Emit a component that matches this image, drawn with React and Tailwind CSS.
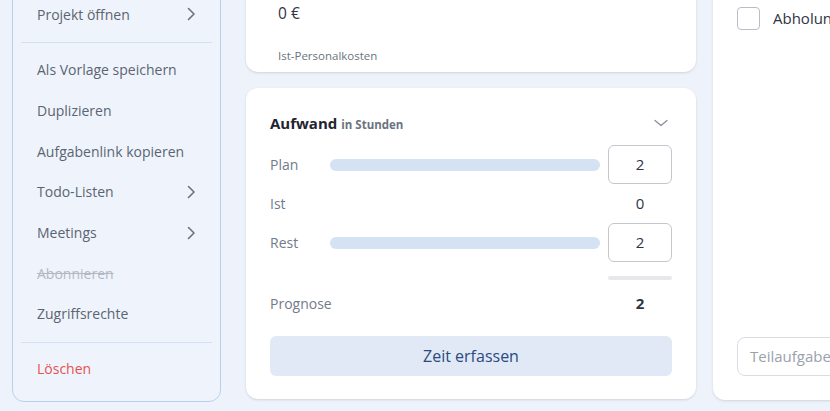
import React from 'react';

const Chevron = () => (
  <svg width="10" height="14" viewBox="0 0 10 14" fill="none" stroke="#6b7280" strokeWidth="1.6" strokeLinecap="round" strokeLinejoin="round">
    <path d="M2.5 1.5 8 7l-5.5 5.5" />
  </svg>
);

const MenuItem = ({ label, arrow, className = 'text-[#5b6472]' }) => (
  <div className={`h-[40.67px] px-4 flex items-center justify-between text-[14px] whitespace-nowrap ${className}`}>
    <span>{label}</span>
    {arrow && <Chevron />}
  </div>
);

const Bar = () => <div className="flex-1 h-3 rounded-full bg-[#d5e2f4] mr-2" />;

const NumInput = ({ value }) => (
  <div className="w-16 h-[39px] rounded-md border border-[#c3c7ce] flex items-center justify-center text-[15px] text-[#2f3542]">
    {value}
  </div>
);

export default function App() {
  return (
    <div
      className="w-[830px] h-[411px] overflow-hidden bg-[#eef3fb] flex items-start"
      style={{ fontFamily: '"Open Sans", Lato, sans-serif' }}
    >
      {/* Menü */}
      <div className="ml-3 w-[209px] shrink-0 -mt-[20px] pt-[13px] pb-[12px] px-2 bg-[#eff4fc] border border-[#b8d0ef] rounded-xl">
        <MenuItem label="Projekt öffnen" arrow />
        <div className="my-[7px] h-px bg-[#d3e1f4]" />
        <MenuItem label="Als Vorlage speichern" />
        <MenuItem label="Duplizieren" />
        <MenuItem label="Aufgabenlink kopieren" />
        <MenuItem label="Todo-Listen" arrow />
        <MenuItem label="Meetings" arrow />
        <MenuItem label="Abonnieren" className="text-[#b3b9c2] line-through" />
        <MenuItem label="Zugriffsrechte" />
        <div className="mt-[7.5px] mb-[5.5px] h-px bg-[#d3e1f4]" />
        <MenuItem label="Löschen" className="text-[#e5524f]" />
      </div>

      {/* Mitte */}
      <div className="ml-[25px] w-[450px] shrink-0 flex flex-col gap-4">
        <div className="-mt-[20px] pt-[22px] pb-2 px-8 bg-white rounded-xl shadow-sm">
          <div className="h-6 flex items-center text-[15.5px] text-[#2f3542]">0 €</div>
          <div className="mt-[22px] h-4 flex items-center text-[11.5px] text-[#6b7380]">Ist-Personalkosten</div>
        </div>

        <div className="bg-white rounded-xl shadow-sm px-6 pt-[23px] pb-[23px]">
          <div className="h-6 flex items-center justify-between">
            <div className="flex items-baseline gap-1">
              <span className="text-[15px] font-bold text-[#1f2430]">Aufwand</span>
              <span className="text-[11.5px] font-bold text-[#6b7380]">in Stunden</span>
            </div>
            <svg width="14" height="8" viewBox="0 0 14 8" fill="none" stroke="#8a909b" strokeWidth="1.3" strokeLinecap="round" strokeLinejoin="round" className="mr-1">
              <path d="M1 1.5 7 6.5l6-5" />
            </svg>
          </div>

          <div className="mt-[10px] text-[14px] text-[#737b89]">
            <div className="h-[39px] flex items-center">
              <span className="w-[60px]">Plan</span>
              <Bar />
              <NumInput value="2" />
            </div>
            <div className="h-[39px] flex items-center">
              <span className="flex-1">Ist</span>
              <span className="w-16 text-center text-[15px] text-[#2f3542]">0</span>
            </div>
            <div className="h-[39px] flex items-center">
              <span className="w-[60px]">Rest</span>
              <Bar />
              <NumInput value="2" />
            </div>
            <div className="mt-[14px] flex justify-end">
              <div className="w-16 h-1 rounded-full bg-[#e6e8eb]" />
            </div>
            <div className="mt-1 h-[39px] flex items-center">
              <span className="flex-1">Prognose</span>
              <span className="w-16 text-center text-[15px] font-bold text-[#2f3542]">2</span>
            </div>
          </div>

          <button className="mt-[13px] w-full h-10 rounded-md bg-[#e1e9f6] text-[16px] text-[#2b4a7e]">
            Zeit erfassen
          </button>
        </div>
      </div>

      {/* Rechts */}
      <div className="ml-[17px] w-[200px] shrink-0 h-[420px] -mt-[20px] bg-white rounded-xl shadow-sm pl-6 pt-[27px] pb-6 flex flex-col">
        <div className="flex items-center gap-[13px]">
          <div className="w-[23px] h-[23px] rounded border border-[#b9bdc5] shrink-0" />
          <span className="text-[15px] text-[#2f3542] whitespace-nowrap">Abholung</span>
        </div>
        <div className="flex-1" />
        <div className="h-[39px] rounded-lg border border-[#d9dde3] flex items-center px-3 text-[15px] text-[#9aa1ad] whitespace-nowrap">
          Teilaufgabe hinzufügen
        </div>
      </div>
    </div>
  );
}
